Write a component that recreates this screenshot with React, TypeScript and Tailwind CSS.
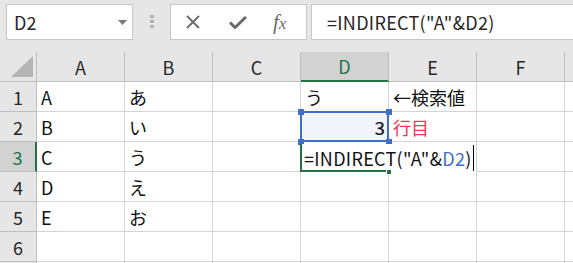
import React from "react";

const COLS = ["A", "B", "C", "D", "E", "F", ""];

type Cell = { text?: string; align?: "right"; color?: string };

const ROWS: Cell[][] = [
  [{ text: "A" }, { text: "あ" }, {}, { text: "う" }, { text: "←検索値" }, {}, {}],
  [{ text: "B" }, { text: "い" }, {}, { text: "3", align: "right" }, { text: "行目", color: "text-[#f0344f]" }, {}, {}],
  [{ text: "C" }, { text: "う" }, {}, {}, {}, {}, {}],
  [{ text: "D" }, { text: "え" }, {}, {}, {}, {}, {}],
  [{ text: "E" }, { text: "お" }, {}, {}, {}, {}, {}],
  [{}, {}, {}, {}, {}, {}, {}],
  [{}, {}, {}, {}, {}, {}, {}],
];

function Toolbar() {
  return (
    <div className="flex h-[52px] items-start bg-[#e6e6e6] pt-[4px]">
      {/* name box */}
      <div className="ml-[6px] flex h-[36px] w-[127px] items-center justify-between border border-[#c6c6c6] bg-white pl-[7px] pr-[5px]">
        <span className="text-[18px] text-[#262626]">D2</span>
        <svg width="9" height="5" viewBox="0 0 9 5">
          <path d="M0 0h9L4.5 5z" fill="#7a7a7a" />
        </svg>
      </div>
      {/* grip */}
      <div className="ml-[17px] mt-[11px] flex flex-col gap-[2px]">
        <div className="h-[3px] w-[4px] bg-[#b3b3b3]" />
        <div className="h-[3px] w-[4px] bg-[#b3b3b3]" />
        <div className="h-[3px] w-[4px] bg-[#b3b3b3]" />
      </div>
      {/* formula buttons */}
      <div className="ml-[16px] flex h-[36px] w-[137px] items-center border border-[#c6c6c6] bg-white">
        <svg className="ml-[14px]" width="16" height="14" viewBox="0 0 16 14">
          <path d="M2 1l12 12M14 1L2 13" stroke="#6b6b6b" strokeWidth="1.8" fill="none" />
        </svg>
        <svg className="ml-[28px]" width="18" height="13" viewBox="0 0 18 13">
          <path d="M1 6.5l5 5L17 1" stroke="#6b6b6b" strokeWidth="3" fill="none" />
        </svg>
        <span className="ml-[26px] font-['Liberation_Serif',serif] text-[21px] italic text-[#6b6b6b]">
          f<span className="text-[17px]">x</span>
        </span>
      </div>
      {/* formula text */}
      <div className="ml-[4px] flex h-[36px] flex-1 items-center border border-r-0 border-[#c6c6c6] bg-white pl-[15px]">
        <span className="text-[18px] tracking-[0.3px] text-[#262626]">=INDIRECT("A"&amp;D2)</span>
      </div>
    </div>
  );
}

function Sheet() {
  return (
    <div className="relative">
      {/* header row */}
      <div className="flex h-[30px]">
        <div className="relative flex w-[37px] shrink-0 items-end justify-end border-r border-b border-[#bfbfbf] bg-[#e6e6e6] pb-[4px] pr-[3px]">
          <svg width="22" height="21" viewBox="0 0 22 21">
            <path d="M22 0v21H0z" fill="#b5b5b5" />
          </svg>
        </div>
        {COLS.map((c, k) => (
          <div
            key={k}
            className={
              c === "D"
                ? "flex w-[88px] shrink-0 items-center justify-center border-r border-b-2 border-r-[#bfbfbf] border-b-[#217346] bg-[#d2d2d2] text-[18px] text-[#217346]"
                : "flex w-[88px] shrink-0 items-center justify-center border-r border-b border-[#bfbfbf] bg-[#e6e6e6] text-[18px] text-[#262626]"
            }
          >
            {c}
          </div>
        ))}
      </div>
      {ROWS.map((row, i) => (
        <div key={i} className="flex h-[30px]">
          <div
            className={
              i === 2
                ? "flex w-[37px] shrink-0 items-center justify-center border-r-2 border-b border-r-[#217346] border-b-[#bfbfbf] bg-[#d2d2d2] text-[18px] text-[#217346]"
                : "flex w-[37px] shrink-0 items-center justify-center border-r border-b border-[#bfbfbf] bg-[#e6e6e6] text-[18px] text-[#262626]"
            }
          >
            {i < 6 ? i + 1 : ""}
          </div>
          {row.map((cell, j) => (
            <div
              key={j}
              className={
                "flex w-[88px] shrink-0 items-center border-r border-b border-[#d4d4d4] px-[4px] text-[18px] whitespace-nowrap " +
                (cell.align === "right" ? "justify-end " : "") +
                (cell.color ?? "text-[#111]")
              }
            >
              {cell.text}
            </div>
          ))}
        </div>
      ))}

      {/* D2 reference highlight */}
      <div className="absolute left-[300px] top-[59px] h-[31px] w-[89px] border-2 border-[#3f6fc6] bg-[#e8eef8]/60" />
      <div className="absolute left-[298px] top-[57px] h-[6px] w-[6px] bg-[#3f6fc6]" />
      <div className="absolute left-[386px] top-[57px] h-[6px] w-[6px] bg-[#3f6fc6]" />
      <div className="absolute left-[298px] top-[87px] h-[6px] w-[6px] bg-[#3f6fc6]" />
      <div className="absolute left-[386px] top-[87px] h-[6px] w-[6px] bg-[#3f6fc6]" />
      <div className="absolute left-[302px] top-[61px] flex h-[27px] w-[85px] items-center justify-end pr-[2px] text-[18px] text-[#111]">
        3
      </div>

      {/* D3 editing cell */}
      <div className="absolute left-[300px] top-[92px] flex h-[28px] w-[176px] items-center bg-white pl-[4px] text-[18px] tracking-[0.3px] whitespace-nowrap text-[#111]">
        <span>=INDIRECT("A"&amp;</span>
        <span className="text-[#3f6fc6]">D2</span>
        <span>)</span>
        <span className="ml-[1px] h-[26px] w-[1px] bg-black" />
      </div>
      <div className="absolute left-[300px] top-[92px] h-[28px] w-[89px] border-b-2 border-l-2 border-[#217346]" />
      <div className="absolute left-[386px] top-[117px] h-[6px] w-[6px] border border-white bg-[#217346]" />
    </div>
  );
}

export default function App() {
  return (
    <div className="h-[263px] w-[573px] overflow-hidden bg-white font-['Noto_Sans_CJK_JP',sans-serif] leading-none">
      <Toolbar />
      <Sheet />
    </div>
  );
}
